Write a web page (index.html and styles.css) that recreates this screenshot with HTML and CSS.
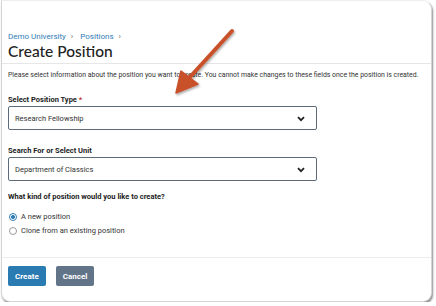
FILE: index.html
```html
<!DOCTYPE html>
<html lang="en">
<head>
    <meta charset="UTF-8">
    <title>Create Position</title>
    <link rel="stylesheet" href="styles.css">
</head>
<body>
    <div class="window">
        <div class="header">
            <div class="crumbs">
                <a href="#">Demo University</a><span class="sep">&rsaquo;</span>
                <a href="#">Positions</a><span class="sep">&rsaquo;</span>
            </div>
            <h1>Create Position</h1>
        </div>

        <div class="form">
            <p class="intro">Please select information about the position you want to create. You cannot make changes to these fields once the position is created.</p>

            <label class="label">Select Position Type <span class="req">*</span></label>
            <div class="select">
                <span>Research Fellowship</span>
                <svg class="chev" width="8" height="6" viewBox="0 0 8 6"><path d="M1 1.2 L4 4.2 L7 1.2" fill="none" stroke="#222" stroke-width="1.8"/></svg>
            </div>

            <label class="label">Search For or Select Unit</label>
            <div class="select last">
                <span>Department of Classics</span>
                <svg class="chev" width="8" height="6" viewBox="0 0 8 6"><path d="M1 1.2 L4 4.2 L7 1.2" fill="none" stroke="#222" stroke-width="1.8"/></svg>
            </div>

            <label class="label">What kind of position would you like to create?</label>
            <div class="radios">
                <div class="radio checked"><span class="dot"></span>A new position</div>
                <div class="radio"><span class="dot"></span>Clone from an existing position</div>
            </div>
        </div>

        <div class="actions">
            <button class="btn primary">Create</button>
            <button class="btn secondary">Cancel</button>
        </div>
    </div>

    <!-- annotation arrow -->
    <svg class="arrow" width="436" height="306" viewBox="0 0 436 306">
        <defs>
            <filter id="sh" x="-20%" y="-20%" width="140%" height="140%">
                <feDropShadow dx="1" dy="1.5" stdDeviation="1.2" flood-color="#000" flood-opacity="0.35"/>
            </filter>
        </defs>
        <g filter="url(#sh)" fill="#c9512b" stroke="#c9512b">
            <line x1="232" y1="31" x2="190" y2="77" stroke-width="4" stroke-linecap="round"/>
            <path d="M176 93 L181 71 L198 84 Z" stroke-width="1.5" stroke-linejoin="round"/>
        </g>
    </svg>
</body>
</html>
```

FILE: styles.css
```css
body {
    margin: 0;
    background: #fff;
    font-family: Roboto, "Liberation Sans", sans-serif;
    color: #333;
}
.window {
    position: relative;
    box-sizing: border-box;
    height: 302px;
    margin: 0 4px 0 1px;
    border: 1px solid #d4d4d4;
    border-top-color: #eee;
    border-radius: 0 0 9px 9px;
    border-top-right-radius: 9px;
    box-shadow: 1px 2px 2px rgba(0,0,0,0.45);
    background: #fff;
}
.header {
    padding: 31px 0 0 6px;
    border-bottom: 1px solid #e6e6e6;
    height: 31px;
}
.crumbs {
    font-size: 8px;
    line-height: 10px;
}
.crumbs a {
    color: #2f7db6;
    text-decoration: none;
}
.crumbs .sep {
    color: #666;
    margin: 0 5px;
}
h1 {
    margin: 0;
    font-family: Lato, sans-serif;
    font-weight: 500;
    font-size: 15.5px;
    line-height: 19px;
    color: #222;
}
.form {
    padding: 6px 6px 0;
    height: 187px;
    border-bottom: 1px solid #ececec;
}
.intro {
    margin: 0 0 15px;
    font-size: 6.9px;
    line-height: 10px;
    white-space: nowrap;
    color: #333;
}
.label {
    display: block;
    font-size: 7.5px;
    font-weight: bold;
    line-height: 10px;
    color: #222;
}
.req { color: #c0392b; }
.select {
    box-sizing: border-box;
    width: 309px;
    height: 24px;
    margin: 1px 0 16px;
    border: 1px solid #5d6b79;
    border-radius: 2px;
    display: flex;
    align-items: center;
    justify-content: space-between;
    padding: 0 11px 0 6px;
    font-size: 7.5px;
    color: #333;
}
.select.last { margin-bottom: 11px; }
.chev { margin-top: 1px; }
.radios {
    margin-top: 10px;
    display: flex;
    flex-direction: column;
    gap: 4px;
}
.radio {
    display: flex;
    align-items: center;
    gap: 4px;
    font-size: 7.5px;
    line-height: 10px;
    color: #333;
}
.dot {
    box-sizing: border-box;
    width: 8px;
    height: 8px;
    border: 1px solid #999;
    border-radius: 50%;
    margin-left: 1px;
}
.radio.checked .dot {
    border-color: #2f7db6;
    background: radial-gradient(circle, #2f7db6 0 1.8px, #fff 2.2px);
}
.actions {
    padding: 8px 6px;
    display: flex;
    gap: 10px;
}
.btn {
    height: 20px;
    border: none;
    border-radius: 2px;
    color: #fff;
    font-family: Roboto, sans-serif;
    font-weight: bold;
    font-size: 8px;
    padding: 0 7px;
}
.primary { background: #2b7bb3; }
.secondary { background: #627487; padding: 0 7px; }
.arrow {
    position: absolute;
    left: 0;
    top: 0;
    pointer-events: none;
}
```
